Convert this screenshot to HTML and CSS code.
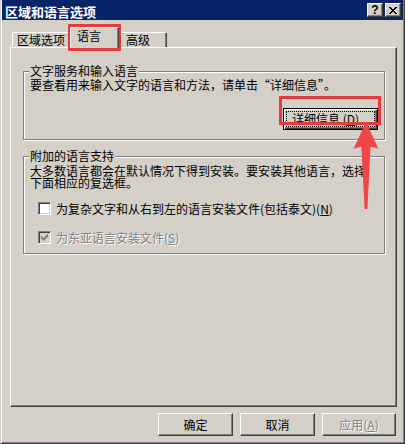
FILE: index.html
```html
<!DOCTYPE html>
<html lang="zh-CN">
<head>
<meta charset="utf-8">
<title>区域和语言选项</title>
<link rel="stylesheet" href="styles.css">
</head>
<body>
<div class="window">
  <div class="titlebar">
    <span class="title">区域和语言选项</span>
    <div class="caption-btns">
      <span class="cbtn help">?</span>
      <span class="cbtn close">
        <svg width="8" height="7" viewBox="0 0 8 7" shape-rendering="crispEdges">
          <rect x="0" y="0" width="2" height="1"/><rect x="6" y="0" width="2" height="1"/>
          <rect x="1" y="1" width="2" height="1"/><rect x="5" y="1" width="2" height="1"/>
          <rect x="2" y="2" width="4" height="1"/>
          <rect x="3" y="3" width="2" height="1"/>
          <rect x="2" y="4" width="4" height="1"/>
          <rect x="1" y="5" width="2" height="1"/><rect x="5" y="5" width="2" height="1"/>
          <rect x="0" y="6" width="2" height="1"/><rect x="6" y="6" width="2" height="1"/>
        </svg>
      </span>
    </div>
  </div>

  <div class="tabs">
    <div class="tab tab-first">区域选项</div>
    <div class="tab tab-active">语言</div>
    <div class="tab tab-last">高级</div>
  </div>

  <div class="panel">
    <fieldset class="group group-input">
      <legend>文字服务和输入语言</legend>
      <p class="desc">要查看用来输入文字的语言和方法，请单击“详细信息”。</p>
      <div class="row-right">
        <button class="btn btn-default"><span class="btn-text">详细信息 (<u>D</u>)...</span></button>
      </div>
    </fieldset>

    <fieldset class="group group-extra">
      <legend>附加的语言支持</legend>
      <p class="desc2">大多数语言都会在默认情况下得到安装。要安装其他语言，选择<br>下面相应的复选框。</p>
      <div class="check check-first">
        <span class="box"></span>
        <span class="label">为复杂文字和从右到左的语言安装文件(包括泰文)(<u>N</u>)</span>
      </div>
      <div class="check check-second disabled">
        <span class="box">
          <svg width="7" height="7" viewBox="0 0 7 7" shape-rendering="crispEdges">
            <rect x="6" y="0" width="1" height="1"/>
            <rect x="5" y="1" width="2" height="1"/>
            <rect x="0" y="2" width="1" height="1"/><rect x="4" y="2" width="3" height="1"/>
            <rect x="0" y="3" width="2" height="1"/><rect x="3" y="3" width="3" height="1"/>
            <rect x="0" y="4" width="5" height="1"/>
            <rect x="1" y="5" width="3" height="1"/>
            <rect x="2" y="6" width="1" height="1"/>
          </svg>
        </span>
        <span class="label">为东亚语言安装文件(<u>S</u>)</span>
      </div>
    </fieldset>
  </div>

  <div class="buttons">
    <button class="btn">确定</button>
    <button class="btn">取消</button>
    <button class="btn btn-apply disabled">应用(<u>A</u>)</button>
  </div>
</div>

<div class="mark mark-tab"></div>
<div class="mark mark-btn"></div>
<svg class="arrow" width="34" height="96" viewBox="350 118 34 96">
  <path d="M366,122 L378.5,149 Q373,146.5 370.6,147 L367.4,209 L364.6,209 L361.4,147 Q359,146.5 353.5,149 Z"/>
</svg>
</body>
</html>
```

FILE: styles.css
```css
* {
  box-sizing: border-box;
}

html,
body {
  margin: 0;
  padding: 0;
}

body {
  width: 405px;
  height: 444px;
  overflow: hidden;
  position: relative;
  background: #d4d0c8;
  color: #000;
  font-family: "Noto Sans CJK SC", "Noto Sans CJK JP", sans-serif;
  font-size: 12px;
}

.window {
  width: 405px;
  height: 444px;
  display: flex;
  flex-direction: column;
  background: #d4d0c8;
  border-left: 1px solid #d4d0c8;
  border-right: 1px solid #404040;
  border-bottom: 1px solid #404040;
  box-shadow: inset 1px 0 #fff, inset -1px -1px #808080;
  padding: 0 1px;
}

/* title bar */
.titlebar {
  height: 20px;
  flex: none;
  background: #0a246a;
  display: flex;
  justify-content: space-between;
  align-items: flex-start;
  padding: 0 2px 0 3px;
}

.title {
  color: #fff;
  font-weight: bold;
  font-size: 13px;
  line-height: 16px;
  margin-top: 4px;
}

.caption-btns {
  display: flex;
  gap: 2px;
  margin-top: 3px;
}

.cbtn {
  width: 16px;
  height: 14px;
  background: #d4d0c8;
  border: 1px solid;
  border-color: #fff #404040 #404040 #fff;
  box-shadow: inset -1px -1px #808080;
  display: flex;
  align-items: center;
  justify-content: center;
}

.help {
  font-family: "Liberation Sans", sans-serif;
  font-weight: bold;
  font-size: 12px;
  line-height: 12px;
  padding-bottom: 1px;
}

.close svg {
  display: block;
  fill: #000;
  margin-left: -1px;
}

/* tabs */
.tabs {
  flex: none;
  display: flex;
  align-items: flex-end;
  height: 20px;
  margin: 7px 0 0 10px;
}

.tab {
  height: 15px;
  line-height: 14px;
  background: #d4d0c8;
  border-top: 1px solid #fff;
  border-radius: 2px 2px 0 0;
  white-space: nowrap;
}

.tab-first {
  width: 58px;
  border-left: 1px solid #fff;
  padding-left: 4px;
}

.tab-active {
  width: 49px;
  height: 21px;
  margin-bottom: -1px;
  border-left: 1px solid #fff;
  border-right: 1px solid #404040;
  box-shadow: inset -1px 0 #808080;
  padding: 1px 0 0 6px;
  position: relative;
  z-index: 1;
}

.tab-last {
  width: 48px;
  border-right: 1px solid #404040;
  box-shadow: inset -1px 0 #808080;
  padding-left: 7px;
}

/* panel */
.panel {
  flex: none;
  width: 387px;
  height: 360px;
  margin-left: 8px;
  border-top: 1px solid #fff;
  border-left: 1px solid #fff;
  border-right: 1px solid #404040;
  border-bottom: 1px solid #404040;
  box-shadow: inset -1px -1px #808080;
  padding: 8px 11px 0 12px;
}

.group {
  margin: 0;
  padding: 0 6px 9px;
  min-width: 0;
  border: 1px solid #808080;
  box-shadow: inset 1px 1px #fff, 1px 1px #fff;
}

.group legend {
  padding: 0 1px;
  margin-left: -1px;
  line-height: 14px;
  background: #d4d0c8;
}

.group-input {
  margin-top: 8px;
}

.group-extra {
  margin-top: 9px;
}

.desc {
  margin: 0;
  line-height: 14px;
  white-space: nowrap;
}

.desc2 {
  margin: 2px 0 0;
  line-height: 12px;
  white-space: nowrap;
}

.row-right {
  display: flex;
  justify-content: flex-end;
  margin-top: 16px;
}

/* checkboxes */
.check {
  display: flex;
  align-items: center;
  gap: 5px;
  margin-left: 8px;
  height: 13px;
  line-height: 13px;
  white-space: nowrap;
}

.check-first {
  margin-top: 13px;
}

.check-second {
  margin-top: 16px;
}

.box {
  flex: none;
  width: 13px;
  height: 13px;
  border: 1px solid;
  border-color: #808080 #fff #fff #808080;
  box-shadow: inset 1px 1px #404040, inset -1px -1px #d4d0c8;
  background: #fff;
  display: flex;
  align-items: center;
  justify-content: center;
}

.box svg {
  display: block;
  fill: #808080;
}

.disabled .box {
  background: #d4d0c8;
}

.disabled .label,
.btn.disabled {
  color: #808080;
  text-shadow: 1px 1px 0 #fff;
}

/* buttons */
.btn {
  font-family: inherit;
  font-size: 12px;
  line-height: 14px;
  width: 75px;
  height: 23px;
  padding: 0;
  margin: 0;
  color: #000;
  background: #d4d0c8;
  border: 1px solid;
  border-color: #fff #404040 #404040 #fff;
  box-shadow: inset -1px -1px #808080;
  border-radius: 0;
  white-space: nowrap;
  overflow: visible;
}

.btn-default {
  width: 95px;
  height: 22px;
  border: 1px solid #000;
  box-shadow: inset 1px 1px #fff, inset -1px -1px #404040, inset -2px -2px #808080;
  outline: 1px dotted #000;
  outline-offset: -4px;
  display: flex;
  align-items: center;
  justify-content: center;
}

.btn-text {
  display: block;
  white-space: nowrap;
  letter-spacing: 0;
}

.buttons {
  flex: none;
  display: flex;
  justify-content: flex-end;
  gap: 7px;
  margin: 6px 7px 0 0;
}

.btn-apply {
  width: 74px;
}

/* annotations */
.mark {
  position: absolute;
  border: 3px solid #e83a3c;
}

.mark-tab {
  left: 68px;
  top: 24px;
  width: 53px;
  height: 27px;
}

.mark-btn {
  left: 279px;
  top: 96px;
  width: 102px;
  height: 29px;
}

.arrow {
  position: absolute;
  left: 350px;
  top: 118px;
  fill: #f04646;
}
```
